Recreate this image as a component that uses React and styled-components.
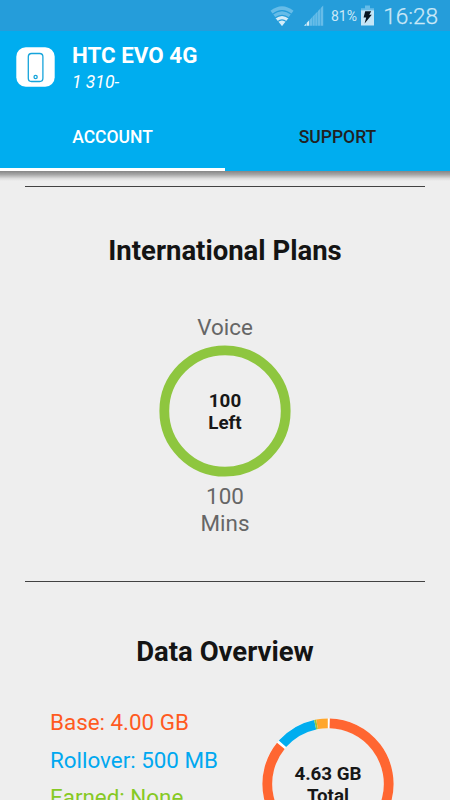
import React from 'react';
import styled, { createGlobalStyle } from 'styled-components';

const GlobalStyle = createGlobalStyle`
  body {
    margin: 0;
    background: #eeeeee;
    font-family: Roboto, "Liberation Sans", sans-serif;
  }

  * {
    box-sizing: border-box;
  }
`;

const polar = (angle, radius) => {
  const rad = ((angle - 90) * Math.PI) / 180;
  return `${66 + radius * Math.cos(rad)} ${66 + radius * Math.sin(rad)}`;
};

const arc = (from, to) =>
  `M${polar(from, 60.7)} A60.7 60.7 0 ${to - from > 180 ? 1 : 0} 1 ${polar(to, 60.7)}`;

const segments = [
  { from: 1.6, to: 309, color: '#ff6631' },
  { from: 311.4, to: 347.8, color: '#00adef' },
  { from: 347.8, to: 349.6, color: '#8ec63f' },
  { from: 349.6, to: 359.8, color: '#ffa62b' },
];

const legend = [
  { text: 'Base: 4.00 GB', color: '#ff5a1f' },
  { text: 'Rollover: 500 MB', color: '#00a8f0' },
  { text: 'Earned: None', color: '#86c924' },
];

const WifiIcon = () => (
  <svg width="24" height="20" viewBox="0 0 24 20" fill="none">
    <path d="M0.5 4.8 Q12 -4.4 23.5 4.8 L12 20Z" fill="#66bce8" />
    <path d="M5.4 12 Q12 7.4 18.6 12 L12 20Z" fill="#d5edf9" />
    <path d="M2.4 8.4 Q12 0.8 21.6 8.4" stroke="#259dda" strokeWidth="1.2" />
    <path d="M5 12 Q12 6.6 19 12" stroke="#259dda" strokeWidth="1.2" />
    <path d="M7.6 15.6 Q12 12.2 16.4 15.6" stroke="#259dda" strokeWidth="1.2" />
  </svg>
);

const SignalIcon = () => (
  <svg width="20" height="21" viewBox="0 0 20 21">
    {[0, 1, 2, 3, 4, 5, 6].map((i) => (
      <path
        key={i}
        d={`M${i * 2.8} 20.8V${20.8 - i * 2.95}L${i * 2.8 + 2.4} ${18.2 - i * 2.95}V20.8Z`}
        fill={i < 2 ? '#d5edf9' : '#66bce8'}
      />
    ))}
  </svg>
);

const BatteryIcon = () => (
  <svg width="13" height="21" viewBox="0 0 13 21">
    <path d="M4 0.5h5v2.7h4v3H0v-3h4z" fill="#66bce8" />
    <path d="M0 5.4h13V20.5H0z" fill="#c5e6f7" />
    <path d="M4.2 6.3h6L8.3 9.8h2.5L3.6 18.4l1.6-5.8H2.6z" fill="#071521" />
  </svg>
);

const PhoneIcon = () => (
  <svg width="39" height="40" viewBox="0 0 39 40" fill="none">
    <rect x="0.3" y="0.3" width="38.4" height="39.4" rx="9.5" fill="#fff" />
    <rect x="12.3" y="6.5" width="14.6" height="28" rx="3.2" stroke="#16a4db" strokeWidth="1.3" />
    <circle cx="19.6" cy="30" r="1.6" stroke="#16a4db" strokeWidth="1.3" />
  </svg>
);

const UsageRing = ({ children, label }) => (
  <Ring>
    <svg width="132" height="132" viewBox="0 0 132 132" fill="none">
      {children}
    </svg>
    <RingLabel>{label}</RingLabel>
  </Ring>
);

const App = () => {
  return (
    <Screen>
      <GlobalStyle />
      <StatusBar>
        <WifiIcon />
        <SignalIcon />
        <Percent>81%</Percent>
        <BatteryIcon />
        <Clock>16:28</Clock>
      </StatusBar>

      <Header>
        <Device>
          <PhoneIcon />
          <div>
            <DeviceName>HTC EVO 4G</DeviceName>
            <DeviceNumber>1 310-</DeviceNumber>
          </div>
        </Device>
        <Tabs>
          <Tab $active>ACCOUNT</Tab>
          <Tab>SUPPORT</Tab>
        </Tabs>
      </Header>
      <HeaderShadow />

      <Content>
        <Plans>
          <Heading>International Plans</Heading>
          <Caption>Voice</Caption>
          <UsageRing label={<>100<br />Left</>}>
            <circle cx="66" cy="66" r="60.7" stroke="#8ec63f" strokeWidth="9.8" />
          </UsageRing>
          <Total>100<br />Mins</Total>
        </Plans>

        <Overview>
          <Heading>Data Overview</Heading>
          <OverviewRow>
            <Legend>
              {legend.map((item) => (
                <LegendItem key={item.text} $color={item.color}>{item.text}</LegendItem>
              ))}
            </Legend>
            <UsageRing label={<>4.63 GB<br />Total</>}>
              <circle cx="66" cy="66" r="60.7" stroke="#fff" strokeWidth="9.8" />
              {segments.map((s) => (
                <path key={s.from} d={arc(s.from, s.to)} stroke={s.color} strokeWidth="9.8" />
              ))}
            </UsageRing>
          </OverviewRow>
        </Overview>
      </Content>
    </Screen>
  );
};

const Screen = styled.div`
  display: flex;
  flex-direction: column;
  width: 450px;
  height: 800px;
  overflow: hidden;
  background: #eeeeee;
`;

const StatusBar = styled.div`
  display: flex;
  flex: none;
  align-items: center;
  height: 31px;
  padding: 0 12px 0 270px;
  background: #259dda;
  color: #cbe8f7;

  svg {
    flex: none;
  }

  svg:nth-of-type(2) {
    margin-left: 9.5px;
  }

  svg:nth-of-type(3) {
    margin-left: 1px;
  }
`;

const Percent = styled.span`
  width: 31px;
  margin-left: 7.5px;
  font-size: 14px;
  line-height: 31px;
  padding-top: 2px;
`;

const Clock = styled.span`
  margin-left: 9px;
  padding-top: 2px;
  font-size: 22.6px;
  font-weight: 300;
  line-height: 31px;
  -webkit-text-stroke: 0.25px #cbe8f7;
`;

const Header = styled.header`
  flex: none;
  height: 140px;
  background: #00adef;
  color: #fff;
`;

const HeaderShadow = styled.div`
  flex: none;
  height: 10px;
  background: linear-gradient(#858585, #a6a6a6 35%, #dcdcdc 75%, #eeeeee);
`;

const Device = styled.div`
  display: flex;
  gap: 17px;
  height: 72px;
  padding: 10px 16px 0;

  svg {
    flex: none;
    margin-top: 6px;
  }
`;

const DeviceName = styled.div`
  font-size: 22.4px;
  font-weight: 700;
  line-height: 29px;
`;

const DeviceNumber = styled.div`
  font-size: 17.5px;
  font-style: italic;
  line-height: 25px;
`;

const Tabs = styled.nav`
  display: flex;
  height: 68px;
`;

const Tab = styled.div`
  flex: 1;
  padding-top: 22px;
  border-bottom: 3px solid ${(props) => (props.$active ? '#fff' : 'transparent')};
  color: ${(props) => (props.$active ? '#fff' : '#212121')};
  font-size: 17.5px;
  font-weight: 500;
  line-height: 24px;
  text-align: center;
`;

const Content = styled.main`
  padding: 5px 25px 0;
`;

const Plans = styled.section`
  display: flex;
  flex-direction: column;
  align-items: center;
  height: 395px;
  padding-top: 45px;
  border-top: 1px solid #424242;
`;

const Overview = styled.section`
  padding-top: 51px;
  border-top: 1px solid #424242;
`;

const Heading = styled.h2`
  margin: 0;
  color: #141414;
  font-size: 27.5px;
  font-weight: 700;
  line-height: 38px;
  text-align: center;
`;

const Caption = styled.div`
  margin-top: 43px;
  color: #666;
  font-size: 22.4px;
  line-height: 28px;
`;

const Total = styled(Caption)`
  margin-top: 6px;
  line-height: 26.5px;
  text-align: center;
`;

const Ring = styled.div`
  display: grid;
  flex: none;
  width: 132px;
  height: 132px;
  margin-top: 4px;

  > * {
    grid-area: 1 / 1;
  }
`;

const RingLabel = styled.div`
  place-self: center;
  padding-top: 2px;
  color: #171717;
  font-size: 18.8px;
  font-weight: 700;
  line-height: 22px;
  text-align: center;
`;

const OverviewRow = styled.div`
  display: flex;
  align-items: flex-start;
  justify-content: space-between;
  padding: 33px 31px 0 25px;

  ${Ring} {
    margin-top: 14px;
  }
`;

const Legend = styled.div`
  display: flex;
  flex-direction: column;
`;

const LegendItem = styled.div`
  color: ${(props) => props.$color};
  font-size: 22.4px;
  line-height: 37.5px;
  white-space: nowrap;
`;

export default App;
